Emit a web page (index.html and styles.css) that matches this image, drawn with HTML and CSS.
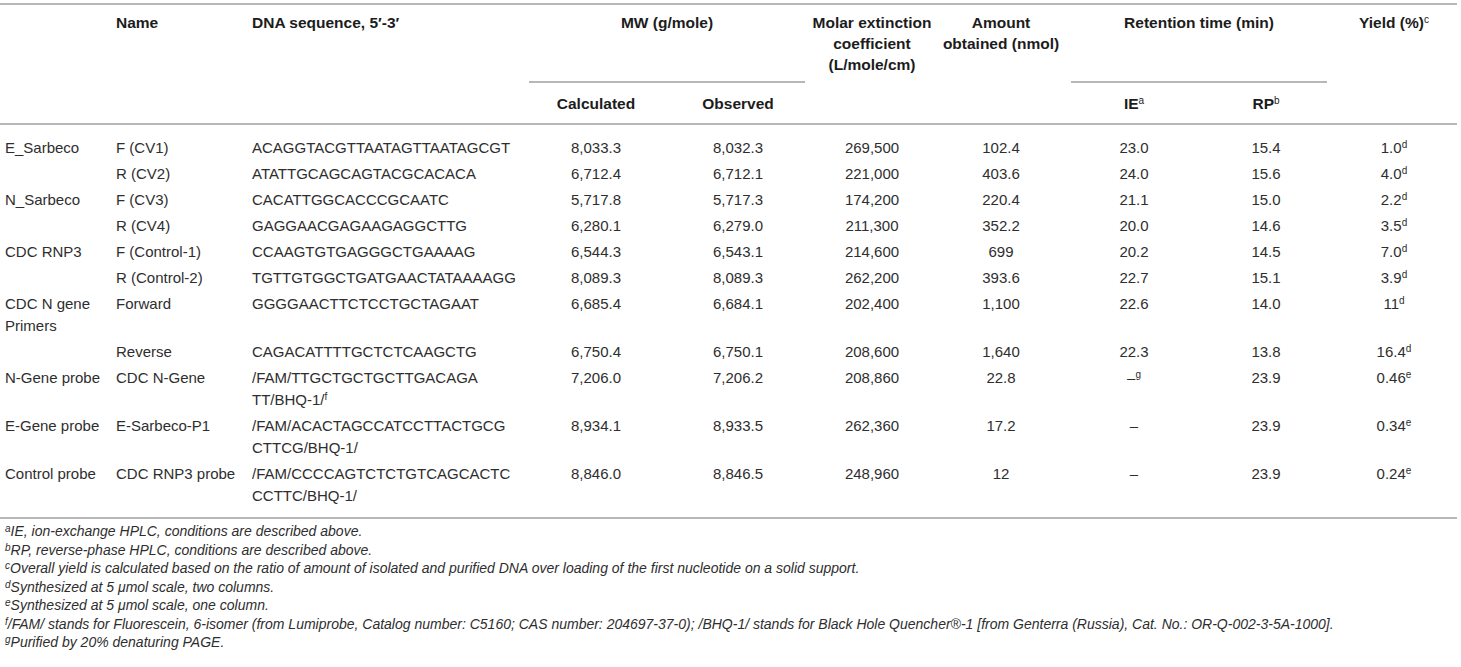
FILE: index.html
```html
<!DOCTYPE html>
<html lang="en">
<head>
<meta charset="utf-8">
<title>Oligonucleotides table</title>
<link rel="stylesheet" href="styles.css">
</head>
<body>
<table class="data">
  <colgroup>
    <col class="c1"><col class="c2"><col class="c3"><col class="c4"><col class="c5">
    <col class="c6"><col class="c7"><col class="c8"><col class="c9"><col class="c10">
  </colgroup>
  <thead>
    <tr class="hr1">
      <th rowspan="2" class="left first span"></th>
      <th rowspan="2" class="left span">Name</th>
      <th rowspan="2" class="left span">DNA sequence, 5′-3′</th>
      <th colspan="2" class="group">MW (g/mole)</th>
      <th rowspan="2" class="span nowrap">Molar extinction<br>coefficient<br>(L/mole/cm)</th>
      <th rowspan="2" class="span nowrap">Amount<br>obtained (nmol)</th>
      <th colspan="2" class="group">Retention time (min)</th>
      <th rowspan="2" class="span">Yield (%)<sup>c</sup></th>
    </tr>
    <tr class="hr2">
      <th>Calculated</th>
      <th>Observed</th>
      <th>IE<sup>a</sup></th>
      <th>RP<sup>b</sup></th>
    </tr>
  </thead>
  <tbody>
    <tr class="firstrow">
      <td class="first">E_Sarbeco</td><td>F (CV1)</td><td class="seq">ACAGGTACGTTAATAGTTAATAGCGT</td>
      <td class="num">8,033.3</td><td class="num">8,032.3</td><td class="num">269,500</td><td class="num">102.4</td>
      <td class="num">23.0</td><td class="num">15.4</td><td class="num">1.0<sup>d</sup></td>
    </tr>
    <tr>
      <td class="first"></td><td>R (CV2)</td><td class="seq">ATATTGCAGCAGTACGCACACA</td>
      <td class="num">6,712.4</td><td class="num">6,712.1</td><td class="num">221,000</td><td class="num">403.6</td>
      <td class="num">24.0</td><td class="num">15.6</td><td class="num">4.0<sup>d</sup></td>
    </tr>
    <tr>
      <td class="first">N_Sarbeco</td><td>F (CV3)</td><td class="seq">CACATTGGCACCCGCAATC</td>
      <td class="num">5,717.8</td><td class="num">5,717.3</td><td class="num">174,200</td><td class="num">220.4</td>
      <td class="num">21.1</td><td class="num">15.0</td><td class="num">2.2<sup>d</sup></td>
    </tr>
    <tr>
      <td class="first"></td><td>R (CV4)</td><td class="seq">GAGGAACGAGAAGAGGCTTG</td>
      <td class="num">6,280.1</td><td class="num">6,279.0</td><td class="num">211,300</td><td class="num">352.2</td>
      <td class="num">20.0</td><td class="num">14.6</td><td class="num">3.5<sup>d</sup></td>
    </tr>
    <tr>
      <td class="first">CDC RNP3</td><td>F (Control-1)</td><td class="seq">CCAAGTGTGAGGGCTGAAAAG</td>
      <td class="num">6,544.3</td><td class="num">6,543.1</td><td class="num">214,600</td><td class="num">699</td>
      <td class="num">20.2</td><td class="num">14.5</td><td class="num">7.0<sup>d</sup></td>
    </tr>
    <tr>
      <td class="first"></td><td>R (Control-2)</td><td class="seq">TGTTGTGGCTGATGAACTATAAAAGG</td>
      <td class="num">8,089.3</td><td class="num">8,089.3</td><td class="num">262,200</td><td class="num">393.6</td>
      <td class="num">22.7</td><td class="num">15.1</td><td class="num">3.9<sup>d</sup></td>
    </tr>
    <tr>
      <td class="first">CDC N gene Primers</td><td>Forward</td><td class="seq">GGGGAACTTCTCCTGCTAGAAT</td>
      <td class="num">6,685.4</td><td class="num">6,684.1</td><td class="num">202,400</td><td class="num">1,100</td>
      <td class="num">22.6</td><td class="num">14.0</td><td class="num">11<sup>d</sup></td>
    </tr>
    <tr>
      <td class="first"></td><td>Reverse</td><td class="seq">CAGACATTTTGCTCTCAAGCTG</td>
      <td class="num">6,750.4</td><td class="num">6,750.1</td><td class="num">208,600</td><td class="num">1,640</td>
      <td class="num">22.3</td><td class="num">13.8</td><td class="num">16.4<sup>d</sup></td>
    </tr>
    <tr>
      <td class="first">N-Gene probe</td><td>CDC N-Gene</td><td class="seq">/FAM/TTGCTGCTGCTTGACAGA<br>TT/BHQ-1/<sup>f</sup></td>
      <td class="num">7,206.0</td><td class="num">7,206.2</td><td class="num">208,860</td><td class="num">22.8</td>
      <td class="num">–<sup>g</sup></td><td class="num">23.9</td><td class="num">0.46<sup>e</sup></td>
    </tr>
    <tr>
      <td class="first">E-Gene probe</td><td>E-Sarbeco-P1</td><td class="seq">/FAM/ACACTAGCCATCCTTACTGCG<br>CTTCG/BHQ-1/</td>
      <td class="num">8,934.1</td><td class="num">8,933.5</td><td class="num">262,360</td><td class="num">17.2</td>
      <td class="num">–</td><td class="num">23.9</td><td class="num">0.34<sup>e</sup></td>
    </tr>
    <tr class="lastrow">
      <td class="first">Control probe</td><td>CDC RNP3 probe</td><td class="seq">/FAM/CCCCAGTCTCTGTCAGCACTC<br>CCTTC/BHQ-1/</td>
      <td class="num">8,846.0</td><td class="num">8,846.5</td><td class="num">248,960</td><td class="num">12</td>
      <td class="num">–</td><td class="num">23.9</td><td class="num">0.24<sup>e</sup></td>
    </tr>
  </tbody>
</table>
<div class="notes">
  <p><sup>a</sup>IE, ion-exchange HPLC, conditions are described above.</p>
  <p><sup>b</sup>RP, reverse-phase HPLC, conditions are described above.</p>
  <p><sup>c</sup>Overall yield is calculated based on the ratio of amount of isolated and purified DNA over loading of the first nucleotide on a solid support.</p>
  <p><sup>d</sup>Synthesized at 5 μmol scale, two columns.</p>
  <p><sup>e</sup>Synthesized at 5 μmol scale, one column.</p>
  <p><sup>f</sup>/FAM/ stands for Fluorescein, 6-isomer (from Lumiprobe, Catalog number: C5160; CAS number: 204697-37-0); /BHQ-1/ stands for Black Hole Quencher®-1 [from Genterra (Russia), Cat. No.: OR-Q-002-3-5A-1000].</p>
  <p><sup>g</sup>Purified by 20% denaturing PAGE.</p>
</div>
</body>
</html>
```

FILE: styles.css
```css
html, body {
  margin: 0;
  padding: 0;
  background: #ffffff;
}

body {
  font-family: "Liberation Sans", Arial, sans-serif;
  color: #2a2a2a;
}

.data {
  width: 1457px;
  margin-top: 3px;
  table-layout: fixed;
  border-collapse: separate;
  border-spacing: 0;
  font-size: 15px;
}

.c1 { width: 112px; }
.c2 { width: 136px; }
.c3 { width: 277px; }
.c4 { width: 142px; }
.c5 { width: 142px; }
.c6 { width: 126px; }
.c7 { width: 132px; }
.c8 { width: 134px; }
.c9 { width: 130px; }
.c10 { width: 126px; }

th {
  font-weight: bold;
  font-size: 15.5px;
  line-height: 21px;
  color: #1c1c1c;
  text-align: center;
  padding: 0 4px;
}

th.nowrap {
  white-space: nowrap;
  padding-left: 0;
  padding-right: 0;
}

.hr1 { height: 80px; }
.hr2 { height: 42px; }

.hr1 th {
  border-top: 2px solid #b8b8b8;
  vertical-align: top;
  padding-top: 7px;
}

.hr1 th.span {
  border-bottom: 2px solid #b8b8b8;
}

.hr2 th {
  border-bottom: 2px solid #b8b8b8;
  vertical-align: middle;
}

th.left { text-align: left; }
th.first, td.first { padding-left: 5px; }

th.group {
  background-image: linear-gradient(#b8b8b8, #b8b8b8);
  background-repeat: no-repeat;
  background-size: calc(100% - 8px) 2px;
  background-position: center bottom;
}

sup {
  font-size: 10px;
  line-height: 0;
  vertical-align: 5px;
  font-weight: normal;
}

td {
  line-height: 22px;
  padding: 2px 4px;
  vertical-align: top;
  text-align: left;
  color: #2e2e2e;
}

td.num { text-align: center; }

td.seq { white-space: nowrap; }

.firstrow td { padding-top: 12px; }

.lastrow td {
  padding-bottom: 10px;
  border-bottom: 2px solid #b8b8b8;
}

.notes {
  margin-top: 3px;
  padding-left: 5px;
  font-size: 14px;
  font-style: italic;
  line-height: 18.5px;
  color: #2e2e2e;
}

.notes p { margin: 0; }

.notes sup {
  font-size: 10px;
  vertical-align: 4px;
}
```
